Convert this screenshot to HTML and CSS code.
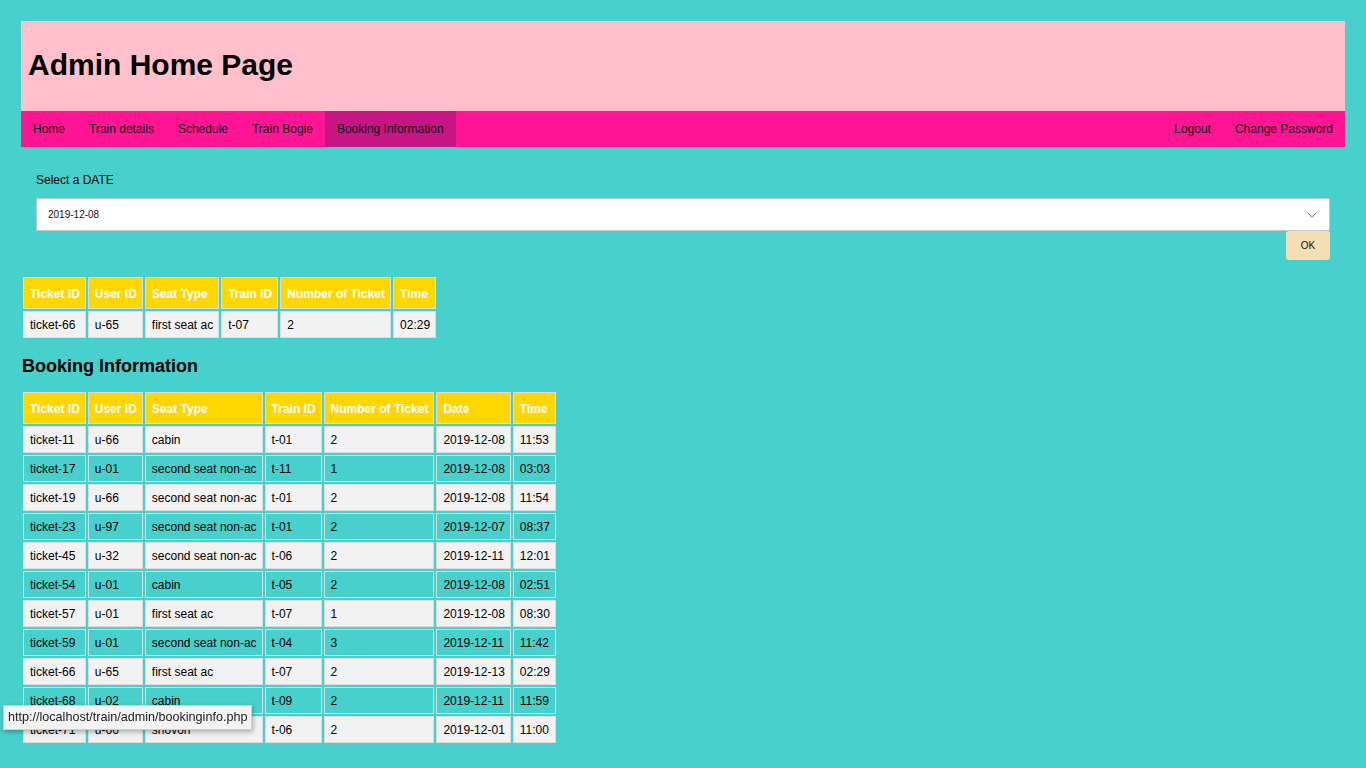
FILE: index.html
```html
<!DOCTYPE html>
<html lang="en">
<head>
<meta charset="utf-8">
<title>Admin Home Page</title>
<link rel="stylesheet" href="styles.css">
</head>
<body>
<div class="header">
  <h1>Admin Home Page</h1>
</div>
<nav class="topnav">
  <div class="nav-group">
    <a href="#" class="nav-link">Home</a>
    <a href="#" class="nav-link">Train details</a>
    <a href="#" class="nav-link">Schedule</a>
    <a href="#" class="nav-link">Train Bogie</a>
    <a href="#" class="nav-link active">Booking Information</a>
  </div>
  <div class="nav-group">
    <a href="#" class="nav-link">Logout</a>
    <a href="#" class="nav-link">Change Password</a>
  </div>
</nav>
<form class="date-form">
  <label class="date-label">Select a DATE</label>
  <div class="select">
    <span>2019-12-08</span>
    <svg class="chev" width="10" height="6" viewBox="0 0 10 6"><path d="M0.5 0.5 L5 5 L9.5 0.5" fill="none" stroke="#777" stroke-width="1"/></svg>
  </div>
  <div class="btn-row"><button type="button" class="ok-btn">OK</button></div>
</form>
<table class="data">
  <tr><th>Ticket ID</th><th>User ID</th><th>Seat Type</th><th>Train ID</th><th>Number of Ticket</th><th>Time</th></tr>
  <tr><td>ticket-66</td><td>u-65</td><td>first seat ac</td><td>t-07</td><td>2</td><td>02:29</td></tr>
</table>
<h3 class="section-title">Booking Information</h3>
<table class="data">
  <tr><th>Ticket ID</th><th>User ID</th><th>Seat Type</th><th>Train ID</th><th>Number of Ticket</th><th>Date</th><th>Time</th></tr>
  <tr><td>ticket-11</td><td>u-66</td><td>cabin</td><td>t-01</td><td>2</td><td>2019-12-08</td><td>11:53</td></tr>
  <tr><td>ticket-17</td><td>u-01</td><td>second seat non-ac</td><td>t-11</td><td>1</td><td>2019-12-08</td><td>03:03</td></tr>
  <tr><td>ticket-19</td><td>u-66</td><td>second seat non-ac</td><td>t-01</td><td>2</td><td>2019-12-08</td><td>11:54</td></tr>
  <tr><td>ticket-23</td><td>u-97</td><td>second seat non-ac</td><td>t-01</td><td>2</td><td>2019-12-07</td><td>08:37</td></tr>
  <tr><td>ticket-45</td><td>u-32</td><td>second seat non-ac</td><td>t-06</td><td>2</td><td>2019-12-11</td><td>12:01</td></tr>
  <tr><td>ticket-54</td><td>u-01</td><td>cabin</td><td>t-05</td><td>2</td><td>2019-12-08</td><td>02:51</td></tr>
  <tr><td>ticket-57</td><td>u-01</td><td>first seat ac</td><td>t-07</td><td>1</td><td>2019-12-08</td><td>08:30</td></tr>
  <tr><td>ticket-59</td><td>u-01</td><td>second seat non-ac</td><td>t-04</td><td>3</td><td>2019-12-11</td><td>11:42</td></tr>
  <tr><td>ticket-66</td><td>u-65</td><td>first seat ac</td><td>t-07</td><td>2</td><td>2019-12-13</td><td>02:29</td></tr>
  <tr><td>ticket-68</td><td>u-02</td><td>cabin</td><td>t-09</td><td>2</td><td>2019-12-11</td><td>11:59</td></tr>
  <tr><td>ticket-71</td><td>u-66</td><td>shovon</td><td>t-06</td><td>2</td><td>2019-12-01</td><td>11:00</td></tr>
</table>
<div class="status-url">http://localhost/train/admin/bookinginfo.php</div>
</body>
</html>
```
FILE: styles.css
```css
html, body {
  margin: 0;
  padding: 0;
}
body {
  background: #48d1cc;
  font-family: "Liberation Sans", Arial, sans-serif;
  font-size: 12px;
  color: #000;
  padding: 21px 21px 0;
  min-height: 768px;
  box-sizing: border-box;
}
.header {
  background: #ffc0cb;
  height: 90px;
  display: flex;
  align-items: center;
  padding-left: 7px;
}
.header h1 {
  margin: 0;
  font-size: 30px;
  font-weight: bold;
  line-height: 34px;
  padding-bottom: 2px;
}
.topnav {
  background: #ff1493;
  height: 36px;
  display: flex;
  justify-content: space-between;
}
.nav-group {
  display: flex;
}
.nav-link {
  display: block;
  padding: 0 12px;
  line-height: 36px;
  color: #111;
  text-decoration: none;
  font-size: 12px;
}
.nav-link.active {
  background: #c71585;
}
.date-form {
  padding: 26px 15px 15px;
  margin: 0;
}
.date-label {
  display: block;
  line-height: 14px;
  margin-bottom: 11px;
}
.select {
  display: flex;
  justify-content: space-between;
  align-items: center;
  background: #fff;
  border: 1px solid #c8c8c8;
  border-radius: 2px;
  height: 31px;
  padding: 0 11px 0 11px;
  font-size: 10px;
  color: #111;
}
.chev {
  display: block;
  margin-right: 1px;
}
.btn-row {
  display: flex;
  justify-content: flex-end;
}
.ok-btn {
  background: #f5deb3;
  border: none;
  border-radius: 3px;
  width: 44px;
  height: 29px;
  font-family: "Liberation Sans", Arial, sans-serif;
  font-size: 10px;
  color: #111;
  padding: 0;
}
table.data {
  border-collapse: separate;
  border-spacing: 2px;
  font-size: 12px;
}
.data th, .data td {
  border: 1px solid #dcdcdc;
  text-align: left;
  white-space: nowrap;
}
.data th {
  background: #ffd700;
  color: #fff;
  font-weight: bold;
  line-height: 14px;
  padding: 9px 5px 7px 6px;
}
.data td {
  line-height: 14px;
  padding: 6px 5px 5px 6px;
}
.data tr:nth-child(even) td {
  background: #f2f2f2;
}
.data tr:nth-child(odd) td {
  background: transparent;
}
.section-title {
  font-size: 18px;
  margin: 16px 0 13px 1px;
  line-height: 21px;
}
.status-url {
  position: fixed;
  left: 3px;
  top: 705px;
  background: #f3f3f3;
  border: 1px solid #cfcfcf;
  box-shadow: 1px 2px 5px rgba(0,0,0,0.3);
  padding: 4px 4px 5px 4px;
  font-size: 12.6px;
  line-height: 14px;
  color: #222;
}
```
